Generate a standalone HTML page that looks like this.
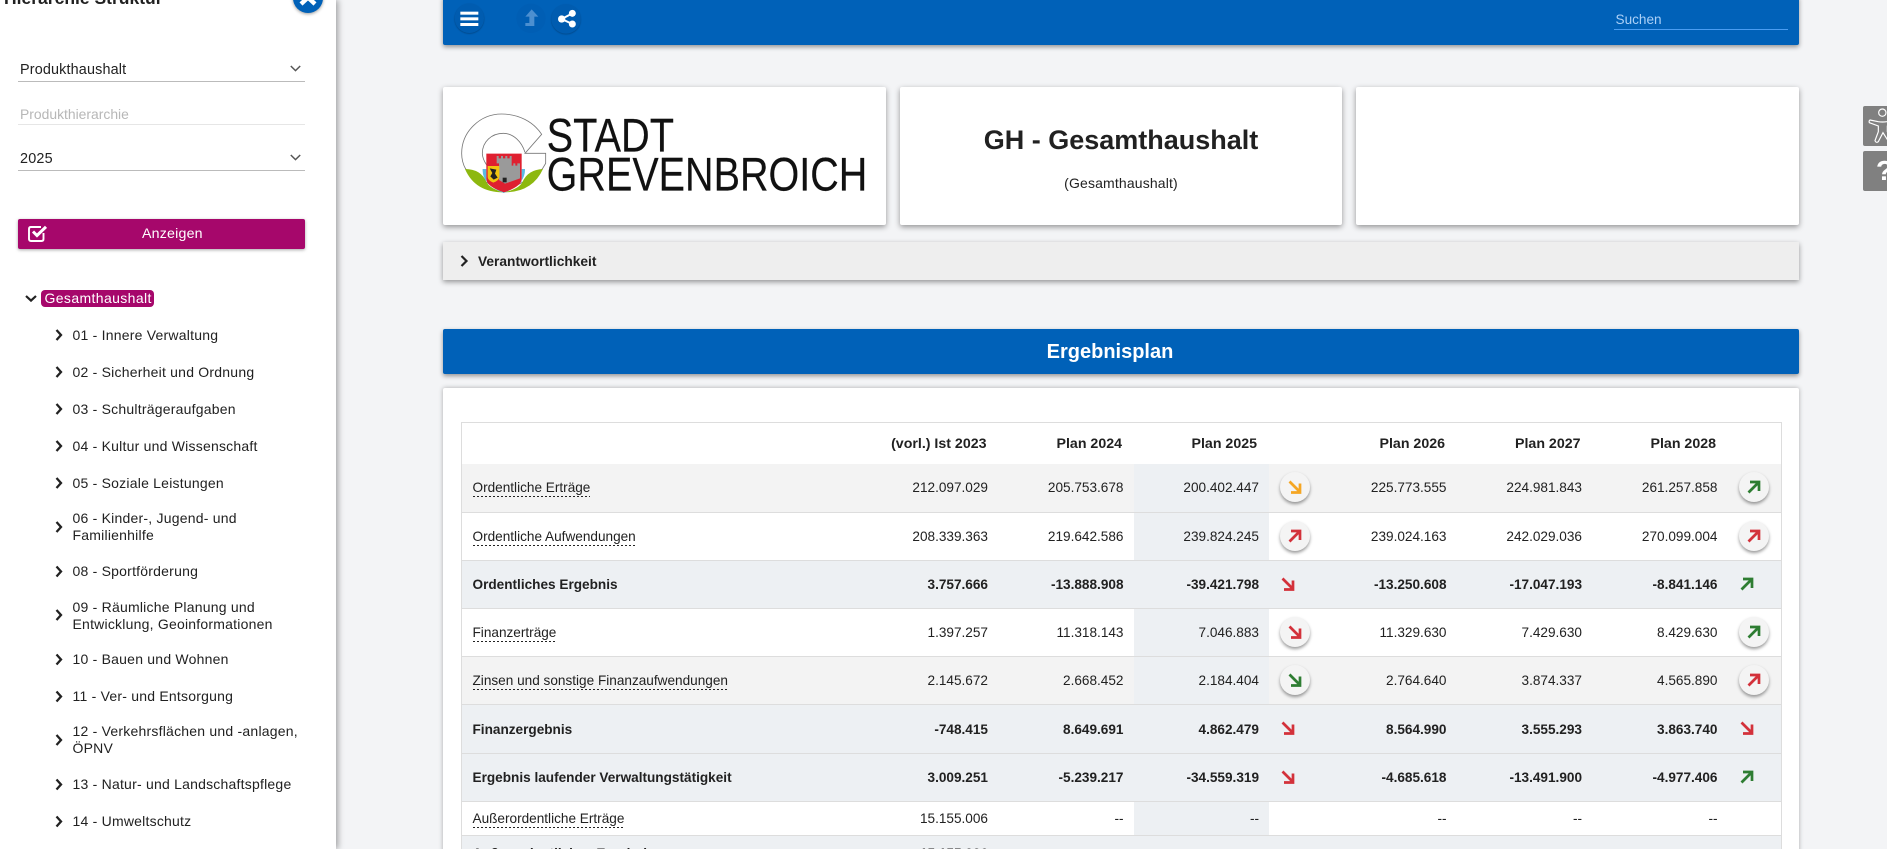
<!DOCTYPE html>
<html lang="de"><head><meta charset="utf-8"><title>Ergebnisplan</title>
<style>
html,body{margin:0;padding:0;width:1887px;height:849px;overflow:hidden;background:#f3f4f6}
body{position:relative;font-family:"Liberation Sans",sans-serif;color:#212121;font-size:14px}
.a{position:absolute;white-space:nowrap}
svg{position:absolute;overflow:visible}
#side{position:absolute;left:0;top:0;width:336px;height:849px;background:#fff;box-shadow:2px 0 6px rgba(0,0,0,.35)}
.t{position:absolute;left:72.5px;font-size:14px;line-height:17px;letter-spacing:.22px;white-space:nowrap;color:#212121}
.card{position:absolute;background:#fff;border-radius:2px;box-shadow:0 2px 6px rgba(0,0,0,.4)}
.r{position:absolute;left:462px;width:1319px;border-bottom:1px solid #ddd;font-size:13.6px;box-sizing:border-box}
.r.g{background:#f3f3f3}.r.b{background:#edf0f3;font-weight:bold}.r.w{background:#fff}
.hl{position:absolute;left:672px;width:135px;top:0;bottom:0;background:#edf0f3}
.n{position:absolute;white-space:nowrap;top:50%;transform:translateY(-50%);line-height:16px}
.n1{right:793px}.n2{right:657.5px}.n3{right:522px}.n4{right:334.5px}.n5{right:199px}.n6{right:63.5px}
.l{position:absolute;left:10.5px;white-space:nowrap;top:50%;transform:translateY(-50%);line-height:16px}
.u{background:linear-gradient(90deg,#222 50%,transparent 50%) left bottom/4px 1px repeat-x;display:inline-block;line-height:14px;padding-bottom:2px;margin-top:2px}
.c{position:absolute;width:30px;height:30px;border-radius:50%;background:#f4f4f4;box-shadow:0 2px 3px rgba(0,0,0,.4);top:50%;margin-top:-16px}
.c1{left:818px}.c2{left:1277px}
.i{position:absolute;width:14px;height:14px}
.c .i{left:8px;top:8px}
.p1{left:819px;top:50%;margin-top:-8px}.p2{left:1278px;top:50%;margin-top:-8px}
.ar{fill:none;stroke-width:2.7}
</style></head><body>

<svg width="0" height="0" style="position:absolute"><defs>
<g id="dn"><path class="ar" d="M1.5 1.5L11.5 11.5M12 3.5V12.5H3"/></g>
<g id="up"><path class="ar" d="M1.5 12.5L11.5 2.5M3 2H12V11"/></g>
</defs></svg>

<!-- sidebar -->
<div id="side"></div>
<div class="a" style="left:4px;top:-12px;font-size:17.5px;font-weight:bold;line-height:20px;color:#212121">Hierarchie Struktur</div>
<div class="a" style="left:293px;top:-17px;width:30px;height:30px;border-radius:50%;background:#0061b8;box-shadow:0 1px 3px rgba(0,0,0,.4)"></div>
<svg style="left:0;top:0" width="340" height="20"><path d="M301 -9L315 4M315 -9L301 4" stroke="#fff" stroke-width="4.4" fill="none"/></svg>

<div class="a" style="left:20px;top:61.500px;font-size:14.4px;line-height:17px;letter-spacing:.15px">Produkthaushalt</div>
<div class="a" style="left:18px;top:81px;width:287px;height:1px;background:#bbb"></div>
<svg style="left:290px;top:65px" width="11" height="7"><path d="M.8 1L5.5 5.6L10.2 1" fill="none" stroke="#555" stroke-width="1.5"/></svg>
<div class="a" style="left:20px;top:105.500px;font-size:13.9px;line-height:17px;color:#b7b7b7">Produkthierarchie</div>
<div class="a" style="left:18px;top:124px;width:287px;height:1px;background:#e6e6e6"></div>
<div class="a" style="left:20px;top:150.500px;font-size:14.4px;line-height:17px;letter-spacing:.2px">2025</div>
<div class="a" style="left:18px;top:170px;width:287px;height:1px;background:#bbb"></div>
<svg style="left:290px;top:154px" width="11" height="7"><path d="M.8 1L5.5 5.6L10.2 1" fill="none" stroke="#555" stroke-width="1.5"/></svg>

<div class="a" style="left:18px;top:219px;width:287px;height:30px;border-radius:2px;background:#a6076b;box-shadow:0 1px 3px rgba(0,0,0,.35)"></div>
<div class="a" style="left:142px;top:224.500px;font-size:14.2px;line-height:18px;letter-spacing:.2px;color:#fff">Anzeigen</div>
<svg style="left:28px;top:225px" width="20" height="18"><path d="M15.5 8V14Q15.5 16 13.5 16H3Q1 16 1 14V4Q1 2 3 2H13" fill="none" stroke="#fff" stroke-width="1.9"/><path d="M5 6.5L9 10.5L18 1.8" fill="none" stroke="#fff" stroke-width="3"/></svg>

<svg style="left:25px;top:295px" width="12" height="7"><path d="M1 1L6 5.6L11 1" fill="none" stroke="#222" stroke-width="2.200"/></svg>
<div class="a" style="left:41px;top:290px;height:17px;width:113px;background:#a6076b;border-radius:4px"></div>
<div class="a" style="left:44.5px;top:290px;font-size:14px;line-height:17px;letter-spacing:.38px;color:#fff">Gesamthaushalt</div>

<svg style="left:0;top:0" width="70" height="849"><g fill="none" stroke="#222" stroke-width="2.300">
<path d="M56.500 330L61 335L56.500 340M56.500 367L61 372L56.500 377M56.500 404L61 409L56.500 414M56.500 441L61 446L56.500 451M56.500 478L61 483L56.500 488M56.500 522L61 527L56.500 532M56.500 566.500L61 571.500L56.500 576.500M56.500 610L61 615L56.500 620M56.500 654.500L61 659.500L56.500 664.500M56.500 691.500L61 696.500L56.500 701.500M56.500 735L61 740L56.500 745M56.500 779.500L61 784.500L56.500 789.500M56.500 816.500L61 821.500L56.500 826.500"/></g></svg>
<div class="t" style="top:327px">01 - Innere Verwaltung</div>
<div class="t" style="top:364px">02 - Sicherheit und Ordnung</div>
<div class="t" style="top:401px">03 - Schulträgeraufgaben</div>
<div class="t" style="top:437.500px">04 - Kultur und Wissenschaft</div>
<div class="t" style="top:474.500px">05 - Soziale Leistungen</div>
<div class="t" style="top:510px">06 - Kinder-, Jugend- und<br>Familienhilfe</div>
<div class="t" style="top:563px">08 - Sportförderung</div>
<div class="t" style="top:598.500px">09 - Räumliche Planung und<br>Entwicklung, Geoinformationen</div>
<div class="t" style="top:650.500px">10 - Bauen und Wohnen</div>
<div class="t" style="top:687.500px">11 - Ver- und Entsorgung</div>
<div class="t" style="top:723px">12 - Verkehrsflächen und -anlagen,<br>ÖPNV</div>
<div class="t" style="top:775.500px">13 - Natur- und Landschaftspflege</div>
<div class="t" style="top:812.500px">14 - Umweltschutz</div>

<!-- top bar -->
<div class="a" style="left:443px;top:-4px;width:1356px;height:49px;background:#0061b8;border-radius:2px;box-shadow:0 2px 5px rgba(0,0,0,.4)"></div>
<svg style="left:450px;top:0" width="140" height="45" viewBox="0 0 420 135">
<circle cx="58" cy="55" r="44" fill="#005cb0" style="filter:drop-shadow(0 2px 2px rgba(0,0,0,.3))"/>
<circle cx="243" cy="55" r="44" fill="#005eb4"/>
<circle cx="348" cy="57" r="44" fill="#005cb0" style="filter:drop-shadow(0 2px 2px rgba(0,0,0,.3))"/>
<g fill="#fff"><rect x="31" y="35" width="54" height="9"/><rect x="31" y="52" width="54" height="9"/><rect x="31" y="69" width="54" height="9"/></g>
<path d="M245 28L265 50H253V78H226V69H238V50H226Z" fill="#4c8fd0"/>
<path d="M335 57L367 40M335 57L367 72" stroke="#fff" stroke-width="6" fill="none"/>
<circle cx="335" cy="57" r="11" fill="#fff"/><circle cx="367" cy="40" r="10.500" fill="#fff"/><circle cx="367" cy="72" r="10.500" fill="#fff"/>
</svg>
<div class="a" style="left:1615.500px;top:11.500px;font-size:13.6px;line-height:16px;color:#abd0f7">Suchen</div>
<div class="a" style="left:1614px;top:29px;width:174px;height:1px;background:#4a9df2"></div>

<!-- cards -->
<div class="card" style="left:443px;top:87px;width:443px;height:138px"></div>
<div class="card" style="left:900px;top:87px;width:442px;height:138px"></div>
<div class="card" style="left:1356px;top:87px;width:443px;height:138px"></div>

<svg style="left:445px;top:95px" width="440" height="120" viewBox="0 0 1320 360">
<path d="M290 118C265 80 220 57 170 57C105 57 50 110 50 175C50 195 54 208 62 222L125 262L175 292L232 262L292 222L302 205V175H240Z" fill="#fff" stroke="#777" stroke-width="2.500"/>
<path d="M125 210C115 195 112 185 112 175C112 140 140 115 175 115C205 115 230 140 240 172" fill="none" stroke="#777" stroke-width="2.500"/>
<path d="M60 222Q108 222 125 262Q135 280 175 292Q90 292 60 222Z" fill="#8db80f"/>
<path d="M294 222Q248 224 232 262Q220 282 178 292Q262 292 294 222Z" fill="#8db80f"/>
<path d="M124 222H113Q110 268 176 294Q242 268 240 222H230V260L176 288L124 260Z" fill="#5bbbe2"/>
<path d="M124 176H230V252Q230 274 177 292Q124 274 124 252Z" fill="#df2030"/>
<path d="M155 183H161V190H168V183H174V190H181V183H187V190H194V183H200V212H205V205H211V212H217V205H225V250L180 266L162 255V205H155Z" fill="#9a9a9a"/>
<rect x="173" y="248" width="12" height="14" fill="#222"/>
<path d="M128 213H163V246Q163 256 145 263Q128 256 128 246Z" fill="#f1c40f"/>
<path d="M134 220L154 224L150 236L158 248L146 254L136 244L142 234Z" fill="#222"/>
<g font-family="'Liberation Sans',sans-serif" fill="#111" stroke="#111" stroke-width=".5" font-size="142">
<text x="305" y="170" textLength="382" lengthAdjust="spacingAndGlyphs">STADT</text>
<text x="305" y="287" textLength="962" lengthAdjust="spacingAndGlyphs">GREVENBROICH</text>
</g></svg>

<div class="a" style="left:900px;width:442px;text-align:center;top:124px;font-size:27px;font-weight:bold;line-height:32px;color:#212121">GH - Gesamthaushalt</div>
<div class="a" style="left:900px;width:442px;text-align:center;top:175px;font-size:14px;line-height:17px;letter-spacing:.15px">(Gesamthaushalt)</div>

<div class="a" style="left:443px;top:242px;width:1356px;height:38px;background:#eee;box-shadow:0 2px 5px rgba(0,0,0,.4)"></div>
<svg style="left:460px;top:255px" width="8" height="12"><path d="M1.500 1L6.500 6L1.500 11" fill="none" stroke="#222" stroke-width="2.200"/></svg>
<div class="a" style="left:478px;top:253px;font-size:13.75px;font-weight:bold;line-height:17px">Verantwortlichkeit</div>

<div class="a" style="left:443px;top:329px;width:1356px;height:45px;background:#0061b8;border-radius:2px;box-shadow:0 2px 5px rgba(0,0,0,.4)"></div>
<div class="a" style="left:443px;width:1356px;top:340px;padding-right:22px;box-sizing:border-box;text-align:center;font-size:20px;font-weight:bold;line-height:24px;color:#fff">Ergebnisplan</div>

<div class="card" style="left:443px;top:388px;width:1356px;height:480px;box-shadow:0 0 5px rgba(0,0,0,.3)"></div>
<div class="a" style="left:461px;top:422px;width:1321px;height:440px;border:1px solid #ddd;box-sizing:border-box"></div>

<!-- header -->
<div class="r" style="top:423px;height:41px;border:0;font-weight:bold;background:#fff;font-size:14.2px">
<span class="n" style="right:794.500px">(vorl.) Ist 2023</span><span class="n" style="right:659px">Plan 2024</span><span class="n" style="right:524px">Plan 2025</span><span class="n" style="right:336px">Plan 2026</span><span class="n" style="right:200.500px">Plan 2027</span><span class="n" style="right:65px">Plan 2028</span>
</div>

<div class="r g" style="top:464px;height:49px"><div class="hl"></div>
<span class="l"><span class="u">Ordentliche Erträge</span></span>
<span class="n n1">212.097.029</span><span class="n n2">205.753.678</span><span class="n n3">200.402.447</span><span class="n n4">225.773.555</span><span class="n n5">224.981.843</span><span class="n n6">261.257.858</span>
<div class="c c1"><svg class="i" viewBox="0 0 14 14" stroke="#f5a623"><use href="#dn"/></svg></div>
<div class="c c2"><svg class="i" viewBox="0 0 14 14" stroke="#2e7d32"><use href="#up"/></svg></div></div>

<div class="r w" style="top:513px;height:48px"><div class="hl"></div>
<span class="l"><span class="u">Ordentliche Aufwendungen</span></span>
<span class="n n1">208.339.363</span><span class="n n2">219.642.586</span><span class="n n3">239.824.245</span><span class="n n4">239.024.163</span><span class="n n5">242.029.036</span><span class="n n6">270.099.004</span>
<div class="c c1"><svg class="i" viewBox="0 0 14 14" stroke="#d3313a"><use href="#up"/></svg></div>
<div class="c c2"><svg class="i" viewBox="0 0 14 14" stroke="#d3313a"><use href="#up"/></svg></div></div>

<div class="r b" style="top:561px;height:48px">
<span class="l">Ordentliches Ergebnis</span>
<span class="n n1">3.757.666</span><span class="n n2">-13.888.908</span><span class="n n3">-39.421.798</span><span class="n n4">-13.250.608</span><span class="n n5">-17.047.193</span><span class="n n6">-8.841.146</span>
<svg class="i p1" viewBox="0 0 14 14" stroke="#d3313a"><use href="#dn"/></svg>
<svg class="i p2" viewBox="0 0 14 14" stroke="#2e7d32"><use href="#up"/></svg></div>

<div class="r w" style="top:609px;height:48px"><div class="hl"></div>
<span class="l"><span class="u">Finanzerträge</span></span>
<span class="n n1">1.397.257</span><span class="n n2">11.318.143</span><span class="n n3">7.046.883</span><span class="n n4">11.329.630</span><span class="n n5">7.429.630</span><span class="n n6">8.429.630</span>
<div class="c c1"><svg class="i" viewBox="0 0 14 14" stroke="#d3313a"><use href="#dn"/></svg></div>
<div class="c c2"><svg class="i" viewBox="0 0 14 14" stroke="#2e7d32"><use href="#up"/></svg></div></div>

<div class="r g" style="top:657px;height:48px"><div class="hl"></div>
<span class="l"><span class="u">Zinsen und sonstige Finanzaufwendungen</span></span>
<span class="n n1">2.145.672</span><span class="n n2">2.668.452</span><span class="n n3">2.184.404</span><span class="n n4">2.764.640</span><span class="n n5">3.874.337</span><span class="n n6">4.565.890</span>
<div class="c c1"><svg class="i" viewBox="0 0 14 14" stroke="#2e7d32"><use href="#dn"/></svg></div>
<div class="c c2"><svg class="i" viewBox="0 0 14 14" stroke="#d3313a"><use href="#up"/></svg></div></div>

<div class="r b" style="top:705px;height:49px">
<span class="l" style="margin-top:.5px">Finanzergebnis</span>
<span class="n n1" style="margin-top:.5px">-748.415</span><span class="n n2" style="margin-top:.5px">8.649.691</span><span class="n n3" style="margin-top:.5px">4.862.479</span><span class="n n4" style="margin-top:.5px">8.564.990</span><span class="n n5" style="margin-top:.5px">3.555.293</span><span class="n n6" style="margin-top:.5px">3.863.740</span>
<svg class="i p1" viewBox="0 0 14 14" stroke="#d3313a"><use href="#dn"/></svg>
<svg class="i p2" viewBox="0 0 14 14" stroke="#d3313a"><use href="#dn"/></svg></div>

<div class="r b" style="top:754px;height:48px">
<span class="l">Ergebnis laufender Verwaltungstätigkeit</span>
<span class="n n1">3.009.251</span><span class="n n2">-5.239.217</span><span class="n n3">-34.559.319</span><span class="n n4">-4.685.618</span><span class="n n5">-13.491.900</span><span class="n n6">-4.977.406</span>
<svg class="i p1" viewBox="0 0 14 14" stroke="#d3313a"><use href="#dn"/></svg>
<svg class="i p2" viewBox="0 0 14 14" stroke="#2e7d32"><use href="#up"/></svg></div>

<div class="r w" style="top:802px;height:34px"><div class="hl"></div>
<span class="l"><span class="u">Außerordentliche Erträge</span></span>
<span class="n n1">15.155.006</span><span class="n n2">--</span><span class="n n3">--</span><span class="n n4">--</span><span class="n n5">--</span><span class="n n6">--</span></div>

<div class="r b" style="top:836px;height:34px;border:0">
<span class="l" style="top:17.500px">Außerordentliches Ergebnis</span>
<span class="n n1" style="top:17.500px">15.155.006</span></div>

<!-- right widgets -->
<div class="a" style="left:1863px;top:106px;width:30px;height:40px;background:#808080;border-radius:2px"></div>
<div class="a" style="left:1863px;top:151px;width:30px;height:40px;background:#808080;border-radius:2px;overflow:hidden"><span style="position:absolute;left:13px;top:3px;font-size:28px;line-height:34px;font-weight:bold;color:#fff">?</span></div>
<svg style="left:1850px;top:100px" width="37" height="50" viewBox="0 0 111 150"><circle cx="97" cy="38" r="11" fill="none" stroke="#fff" stroke-width="3.500"/><path d="M60 60L85 65Q97 67 110 65L134 60Q140 60 138 68L112 78V95L125 125Q122 130 116 125L99 98L85 125Q78 130 75 122L85 95V78L58 68Q56 62 60 60Z" fill="none" stroke="#fff" stroke-width="3.500"/></svg>
</body></html>
